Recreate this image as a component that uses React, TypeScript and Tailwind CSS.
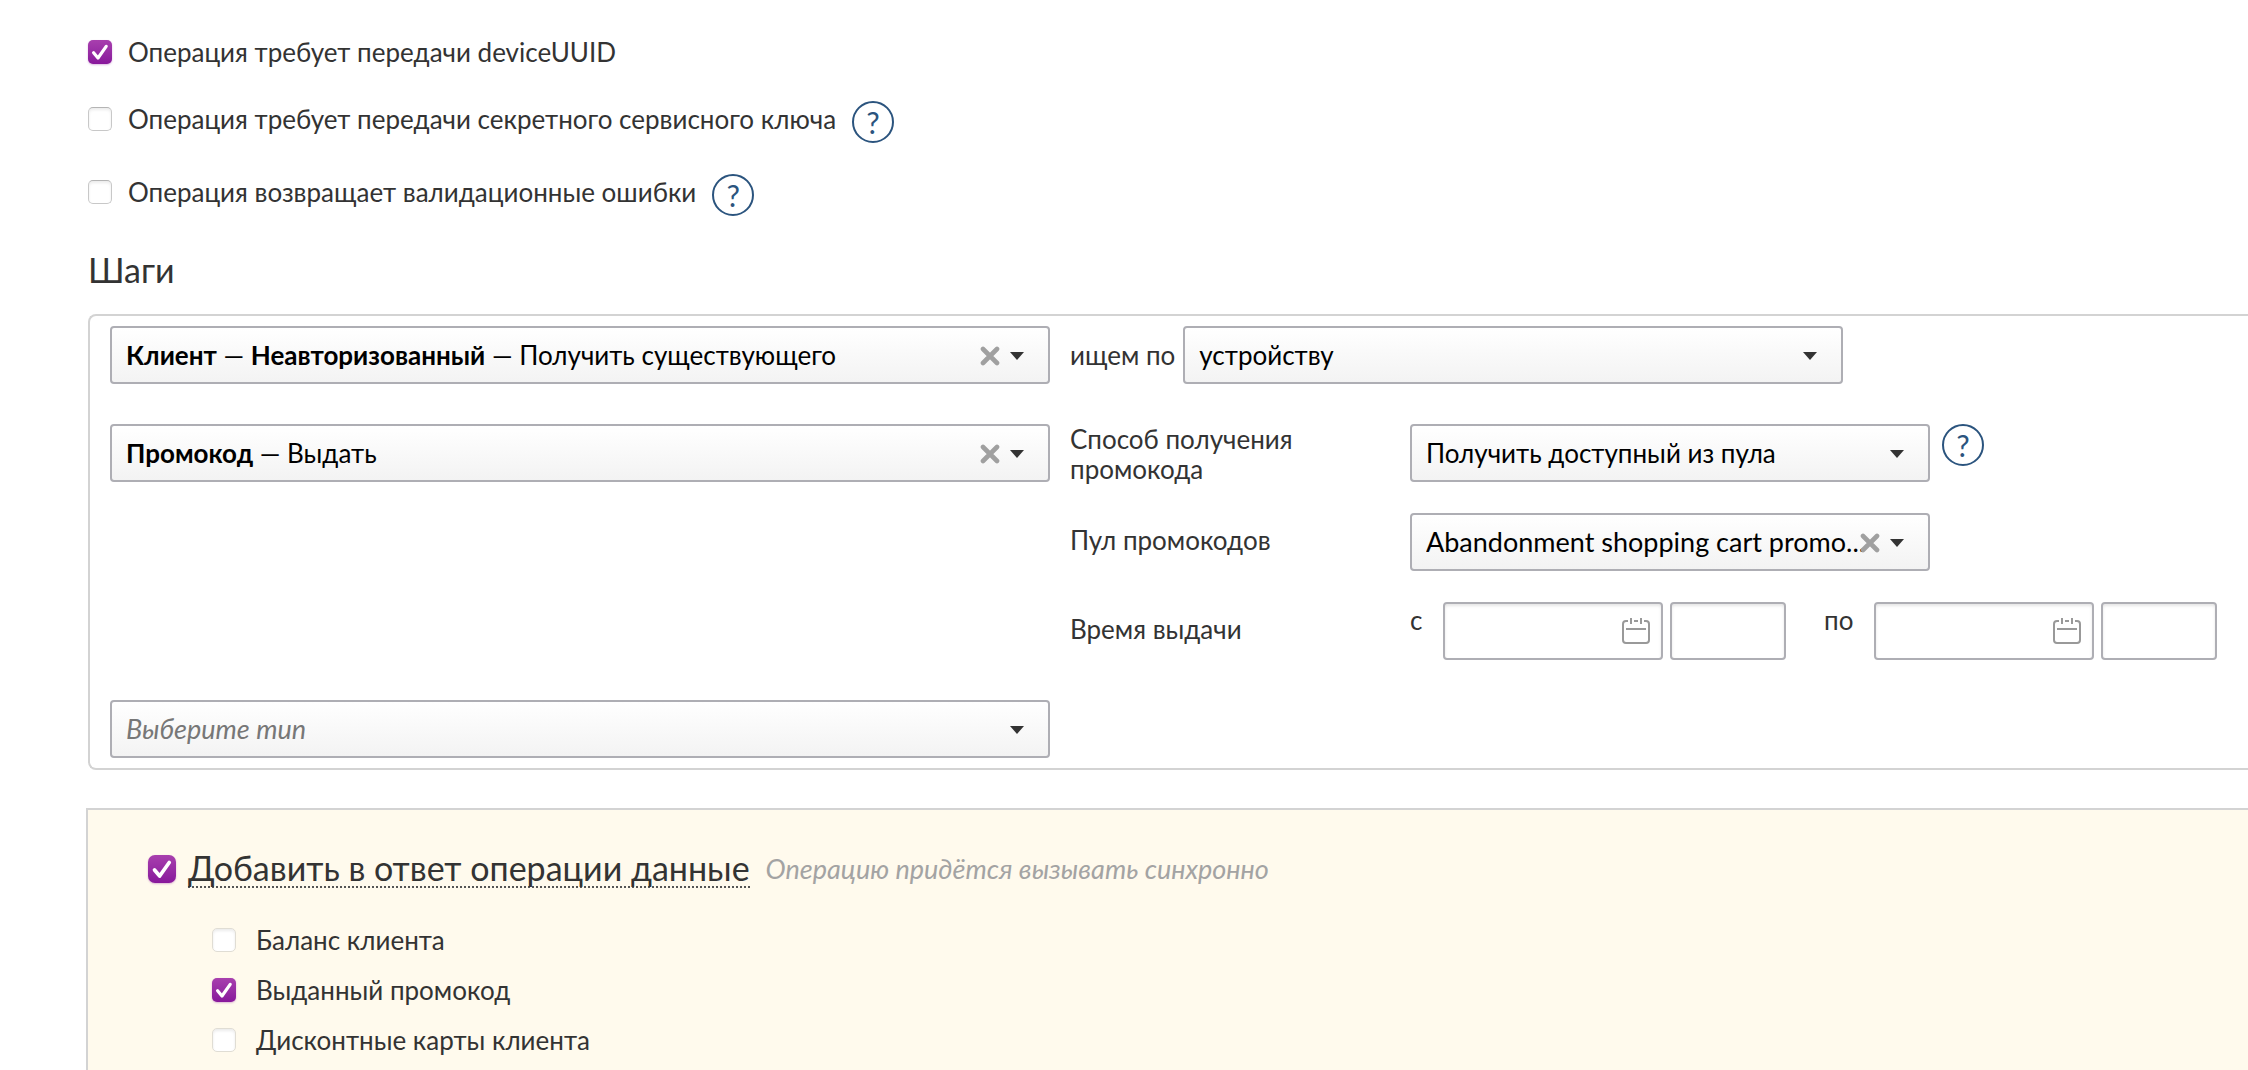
import type { ReactNode } from "react";
import clsx from "clsx";

type CheckProps = {
    id: string;
    checked?: boolean;
    large?: boolean;
    faded?: boolean;
};

function Check({ id, checked, large, faded }: CheckProps) {
    return <span className={clsx("relative shrink-0", large ? "size-7" : "size-6")}>
        <input
            id={id}
            type="checkbox"
            defaultChecked={checked}
            className={clsx(
                "peer block size-full appearance-none border bg-white shadow-[inset_0_2px_3px_rgba(0,0,0,0.08)] checked:border-0 checked:bg-linear-to-b checked:from-[#a83fae] checked:to-[#88179b] checked:shadow-[0_1px_2px_rgba(136,23,155,0.3)]",
                large ? "rounded-[7px]" : "rounded-[5px]",
                faded ? "border-[#e0ddd4] bg-[#fffefa]" : "border-[#c8c8c8] border-t-[#b4b4b4]"
            )}
        />
        <svg viewBox="0 0 24 24" fill="none" className="pointer-events-none absolute inset-0 hidden size-full peer-checked:block">
            <path d="M5.6 12.8 L10 18 L18.2 6.4" stroke="#fff" strokeWidth="3.2" strokeLinecap="round" strokeLinejoin="round" />
        </svg>
    </span>
}

function Help() {
    return <button type="button" aria-label="Справка" className="flex size-[42px] shrink-0 items-center justify-center rounded-full border-2 border-[#2b547e] text-[30px] leading-none text-[#2b547e]">
        ?
    </button>
}

type DropdownProps = {
    label: string;
    value: string;
    rich?: ReactNode;
    clearable?: boolean;
    placeholder?: boolean;
    className?: string;
};

function Dropdown({ label, value, rich, clearable, placeholder, className }: DropdownProps) {
    return <div className={clsx("relative h-[58px] shrink-0", className)}>
        <select
            aria-label={label}
            className={clsx(
                "block size-full appearance-none rounded-[4px] border-2 border-[#aeaeb4] bg-linear-to-b from-white to-[#f3f3f3] pr-12 pl-[14px]",
                rich ? "text-transparent" : placeholder ? "text-[#777] italic" : "text-black"
            )}
        >
            <option>{value}</option>
        </select>
        {rich && <div aria-hidden="true" className="pointer-events-none absolute inset-0 flex items-center pl-4 whitespace-pre text-black">
            <span>{rich}</span>
        </div>}
        {clearable && <button type="button" aria-label="Очистить" className="absolute top-5 right-[50px]">
            <svg viewBox="0 0 20 20" className="size-5" fill="none">
                <path d="M3 3 L17 17 M17 3 L3 17" stroke="#a0a0a0" strokeWidth="4.6" strokeLinecap="round" />
            </svg>
        </button>}
        <svg viewBox="0 0 14 8" className="pointer-events-none absolute top-[26px] right-[26px] h-2 w-[14px]">
            <path d="M0 0 H14 L7 8 Z" fill="#333" />
        </svg>
    </div>
}

function DateTime({ label }: { label: string }) {
    return <div className="flex gap-[7px]">
        <div className="relative">
            <input type="text" aria-label={`Дата ${label}`} className="block h-[58px] w-[220px] rounded-[4px] border-2 border-[#aeaeb4] bg-white px-3 shadow-[inset_0_2px_3px_rgba(0,0,0,0.1)]" />
            <svg viewBox="0 0 28 26" fill="none" stroke="#999" strokeWidth="2" className="pointer-events-none absolute top-4 right-[13px] h-[26px] w-7">
                <path d="M6 3 H4 Q1 3 1 6 V22 Q1 25 4 25 H24 Q27 25 27 22 V6 Q27 3 24 3 H22" />
                <path d="M9 0 V6 M19 0 V6 M12 3 H16 M4 11 H24" />
            </svg>
        </div>
        <input type="text" aria-label={`Время ${label}`} className="block h-[58px] w-[116px] rounded-[4px] border-2 border-[#aeaeb4] bg-white px-3 shadow-[inset_0_2px_3px_rgba(0,0,0,0.1)]" />
    </div>
}

const options = [
    { id: "device", text: "Операция требует передачи deviceUUID", checked: true, help: false },
    { id: "secret", text: "Операция требует передачи секретного сервисного ключа", checked: false, help: true },
    { id: "validation", text: "Операция возвращает валидационные ошибки", checked: false, help: true },
];

const responseData = [
    { id: "balance", text: "Баланс клиента", checked: false },
    { id: "promocode", text: "Выданный промокод", checked: true },
    { id: "cards", text: "Дисконтные карты клиента", checked: false },
];

export default function App() {
    return <main className="flex min-h-screen flex-col overflow-hidden bg-white pt-[34px] pl-[86px] font-[Lato,'Open_Sans',sans-serif] text-[26px] text-[#333]">
        <div className="flex flex-col gap-[31px] pl-0.5">
            {options.map((o) => <div key={o.id} className="flex items-start gap-4">
                <label htmlFor={o.id} className="flex h-9 items-center gap-4 whitespace-nowrap">
                    <Check id={o.id} checked={o.checked} />
                    {o.text}
                </label>
                {o.help && <Help />}
            </div>)}
        </div>

        <h2 className="mt-[30px] pl-0.5 text-[34px] leading-[48px]">Шаги</h2>

        <section className="mt-5 ml-0.5 flex flex-col gap-10 rounded-l-lg border-2 border-r-0 border-[#d3d3d3] py-[10px] pl-5">
            <div className="flex items-center">
                <Dropdown
                    label="Шаг 1"
                    value="Клиент — Неавторизованный — Получить существующего"
                    rich={<><b>Клиент</b> — <b>Неавторизованный</b> — Получить существующего</>}
                    clearable
                    className="w-[940px]"
                />
                <span className="mr-2 ml-5 whitespace-nowrap">ищем по</span>
                <Dropdown label="ищем по" value="устройству" className="w-[660px]" />
            </div>

            <div className="flex items-start gap-5">
                <Dropdown
                    label="Шаг 2"
                    value="Промокод — Выдать"
                    rich={<><b>Промокод</b> — Выдать</>}
                    clearable
                    className="w-[940px]"
                />
                <div className="flex flex-col gap-[31px]">
                    <div className="flex h-[58px] items-start">
                        <span className="w-[340px] shrink-0 leading-[30px]">Способ получения<br />промокода</span>
                        <Dropdown label="Способ получения промокода" value="Получить доступный из пула" className="mr-3 w-[520px]" />
                        <Help />
                    </div>
                    <div className="flex items-start">
                        <span className="w-[340px] shrink-0 leading-[54px]">Пул промокодов</span>
                        <Dropdown label="Пул промокодов" value="Abandonment shopping cart promo..." clearable className="w-[520px] text-[27px]" />
                    </div>
                    <div className="flex items-start">
                        <span className="w-[340px] shrink-0 leading-[54px]">Время выдачи</span>
                        <span className="w-[33px] shrink-0 leading-9">с</span>
                        <DateTime label="с" />
                        <span className="ml-[38px] w-[50px] shrink-0 leading-9">по</span>
                        <DateTime label="по" />
                    </div>
                </div>
            </div>

            <Dropdown label="Тип шага" value="Выберите тип" placeholder className="w-[940px] text-[27px]" />
        </section>

        <section className="mt-[38px] grow border-t-2 border-l-2 border-[#d3d3d3] bg-[#fffaed] pt-[35px] pl-[60px]">
            <div className="flex h-12 items-center">
                <label htmlFor="response" className="flex items-center gap-3 text-[34px] whitespace-nowrap">
                    <Check id="response" checked large />
                    <span className="border-b-2 border-dotted border-[#555] leading-9">Добавить в ответ операции данные</span>
                </label>
                <span className="ml-4 text-[27px] whitespace-nowrap text-[#a3a3a3] italic">Операцию придётся вызывать синхронно</span>
            </div>
            <div className="mt-[22px] flex flex-col pl-16">
                {responseData.map((d) => <label key={d.id} htmlFor={d.id} className="flex h-[50px] items-center gap-5">
                    <Check id={d.id} checked={d.checked} faded />
                    {d.text}
                </label>)}
            </div>
        </section>
    </main>
}
